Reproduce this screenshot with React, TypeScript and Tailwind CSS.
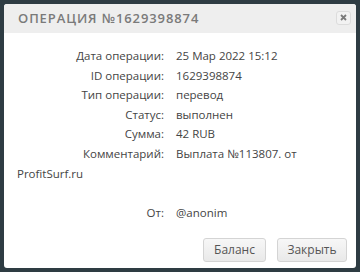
export default function App() {
  const rows = [
    ['Дата операции:', '25 Мар 2022 15:12'],
    ['ID операции:', '1629398874'],
    ['Тип операции:', 'перевод'],
    ['Статус:', 'выполнен'],
    ['Сумма:', '42 RUB'],
  ];

  return (
    <div className="w-[360px] h-[272px] bg-[#2e3c43] p-[4px] font-['Open_Sans',sans-serif]">
      <div className="w-[352px] h-[264px] bg-white rounded-[3px] flex flex-col overflow-hidden">
        {/* Header */}
        <div className="h-[29px] bg-[#eeeeee] flex items-center justify-between pl-[14px] pr-[5px]">
          <span className="text-[13px] tracking-[0.9px] text-[#7a7a7a] font-semibold">ОПЕРАЦИЯ №1629398874</span>
          <button className="w-[15px] h-[14px] mt-[-2px] rounded-[3px] border border-[#dcdcdc] bg-[#f2f2f2] flex items-center justify-center">
            <svg width="7" height="7" viewBox="0 0 7 7">
              <path d="M1 1 L6 6 M6 1 L1 6" stroke="#7a7a7a" strokeWidth="1.8" />
            </svg>
          </button>
        </div>

        {/* Body */}
        <div className="flex-1 pt-[13px] px-[13px] text-[11.5px] text-[#444]">
          {rows.map(([label, value]) => (
            <div key={label} className="flex h-[19.5px] items-center">
              <span className="w-[147px] text-right">{label}</span>
              <span className="ml-[12px]">{value}</span>
            </div>
          ))}
          <div className="flex h-[19.5px] items-center">
            <span className="w-[147px] text-right">Комментарий:</span>
            <span className="ml-[12px]">Выплата №113807. от</span>
          </div>
          <div className="h-[20px] mt-[0.5px] flex items-center">ProfitSurf.ru</div>
          <div className="h-[19.5px]" />
          <div className="flex h-[19.5px] items-center">
            <span className="w-[147px] text-right">От:</span>
            <span className="ml-[12px]">@anonim</span>
          </div>

          <div className="flex justify-end gap-[11px] mt-[15px] mr-[-4px]">
            <button className="w-[63px] h-[24px] rounded-[3px] border border-[#d4d4d4] bg-gradient-to-b from-[#f7f7f7] to-[#e9e9e9] text-[12px] text-[#555]">
              Баланс
            </button>
            <button className="w-[70px] h-[24px] rounded-[3px] border border-[#d4d4d4] bg-gradient-to-b from-[#f7f7f7] to-[#e9e9e9] text-[12px] text-[#555]">
              Закрыть
            </button>
          </div>
        </div>
      </div>
    </div>
  );
}
